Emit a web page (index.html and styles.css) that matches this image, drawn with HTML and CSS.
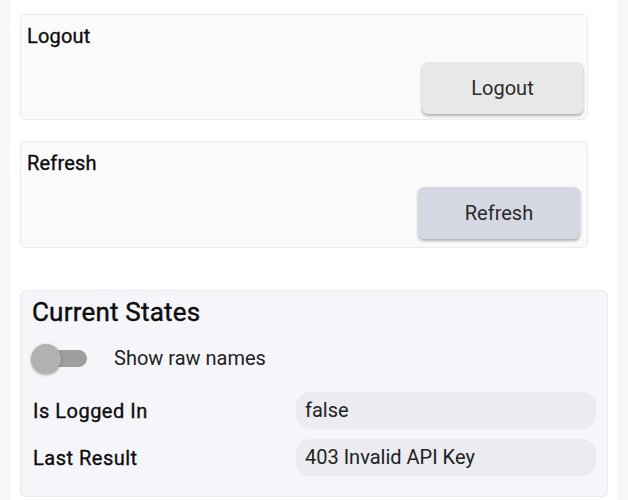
FILE: index.html
```html
<!DOCTYPE html>
<html lang="en">
<head>
<meta charset="utf-8">
<title>Account</title>
<link rel="stylesheet" href="styles.css">
</head>
<body>
<div class="page">
  <section class="card action-card">
    <div class="card-title">Logout</div>
    <button class="btn btn-logout">Logout</button>
  </section>
  <section class="card action-card action-card-refresh">
    <div class="card-title">Refresh</div>
    <button class="btn btn-refresh">Refresh</button>
  </section>
  <section class="card states-card">
    <h2 class="states-title">Current States</h2>
    <div class="toggle-row">
      <span class="switch"><span class="switch-thumb"></span></span>
      <span class="toggle-label">Show raw names</span>
    </div>
    <div class="state-grid">
      <div class="state-label">Is Logged In</div>
      <div class="state-value">false</div>
      <div class="state-label">Last Result</div>
      <div class="state-value">403 Invalid API Key</div>
    </div>
  </section>
</div>
</body>
</html>
```
FILE: styles.css
```css
html, body {
  margin: 0;
  padding: 0;
}
body {
  background: #f7f7f7;
  font-family: Roboto, "Liberation Sans", sans-serif;
  color: #111;
}
.page {
  margin: 0 10px;
  background: #ffffff;
  min-height: 500px;
  padding: 14px 10px 0 10px;
  box-sizing: border-box;
}
.card {
  border: 1px solid #ebebeb;
  border-radius: 6px;
  background: #fafafa;
}
.action-card {
  display: flex;
  flex-direction: column;
  margin-right: 20px;
  padding: 9px 4px 5px 6px;
  margin-bottom: 21px;
}
.action-card-refresh {
  padding-bottom: 8px;
}
.card-title {
  font-size: 20px;
  line-height: 24px;
  font-weight: 400;
  letter-spacing: 0.2px;
  -webkit-text-stroke: 0.35px #0d0d0d;
  color: #0d0d0d;
}
.btn {
  align-self: flex-end;
  height: 52px;
  border: none;
  border-radius: 6px;
  font-family: Roboto, "Liberation Sans", sans-serif;
  font-size: 20px;
  color: #2a2a2a;
  box-shadow: 0 2px 3px rgba(0, 0, 0, 0.3);
  margin-top: 14px;
}
.btn-logout {
  background: #e8e8e8;
  width: 161px;
}
.btn-refresh {
  background: #d5d7e3;
  width: 162px;
  margin-right: 3px;
  margin-top: 12px;
}
.states-card {
  margin-top: 42px;
  background: #f5f5fa;
  border-color: #e9e9ee;
  padding: 6px 11px 20px 11px;
}
.states-title {
  margin: 0;
  font-size: 26px;
  line-height: 30px;
  font-weight: 400;
  letter-spacing: 0.2px;
  -webkit-text-stroke: 0.4px #0d0d0d;
  color: #0d0d0d;
}
.toggle-row {
  display: flex;
  align-items: center;
  margin-top: 16px;
  height: 30px;
}
.switch {
  position: relative;
  width: 55px;
  height: 17px;
  border-radius: 9px;
  background: #9e9e9e;
}
.switch-thumb {
  position: absolute;
  left: -1px;
  top: -6px;
  width: 30px;
  height: 30px;
  border-radius: 50%;
  background: #b1b1b1;
  box-shadow: 0 1px 3px rgba(0, 0, 0, 0.35);
}
.toggle-label {
  margin-left: 27px;
  font-size: 20px;
  color: #222;
}
.state-grid {
  display: grid;
  grid-template-columns: 264px 1fr;
  row-gap: 10px;
  margin-top: 19px;
  align-items: center;
}
.state-label {
  font-size: 20px;
  font-weight: 400;
  letter-spacing: 0.5px;
  -webkit-text-stroke: 0.35px #0d0d0d;
  color: #0d0d0d;
  padding-left: 1px;
}
.state-value {
  height: 37px;
  line-height: 37px;
  border-radius: 14px;
  background: #ebebf0;
  padding-left: 9px;
  font-size: 20px;
  color: #222;
}
```
